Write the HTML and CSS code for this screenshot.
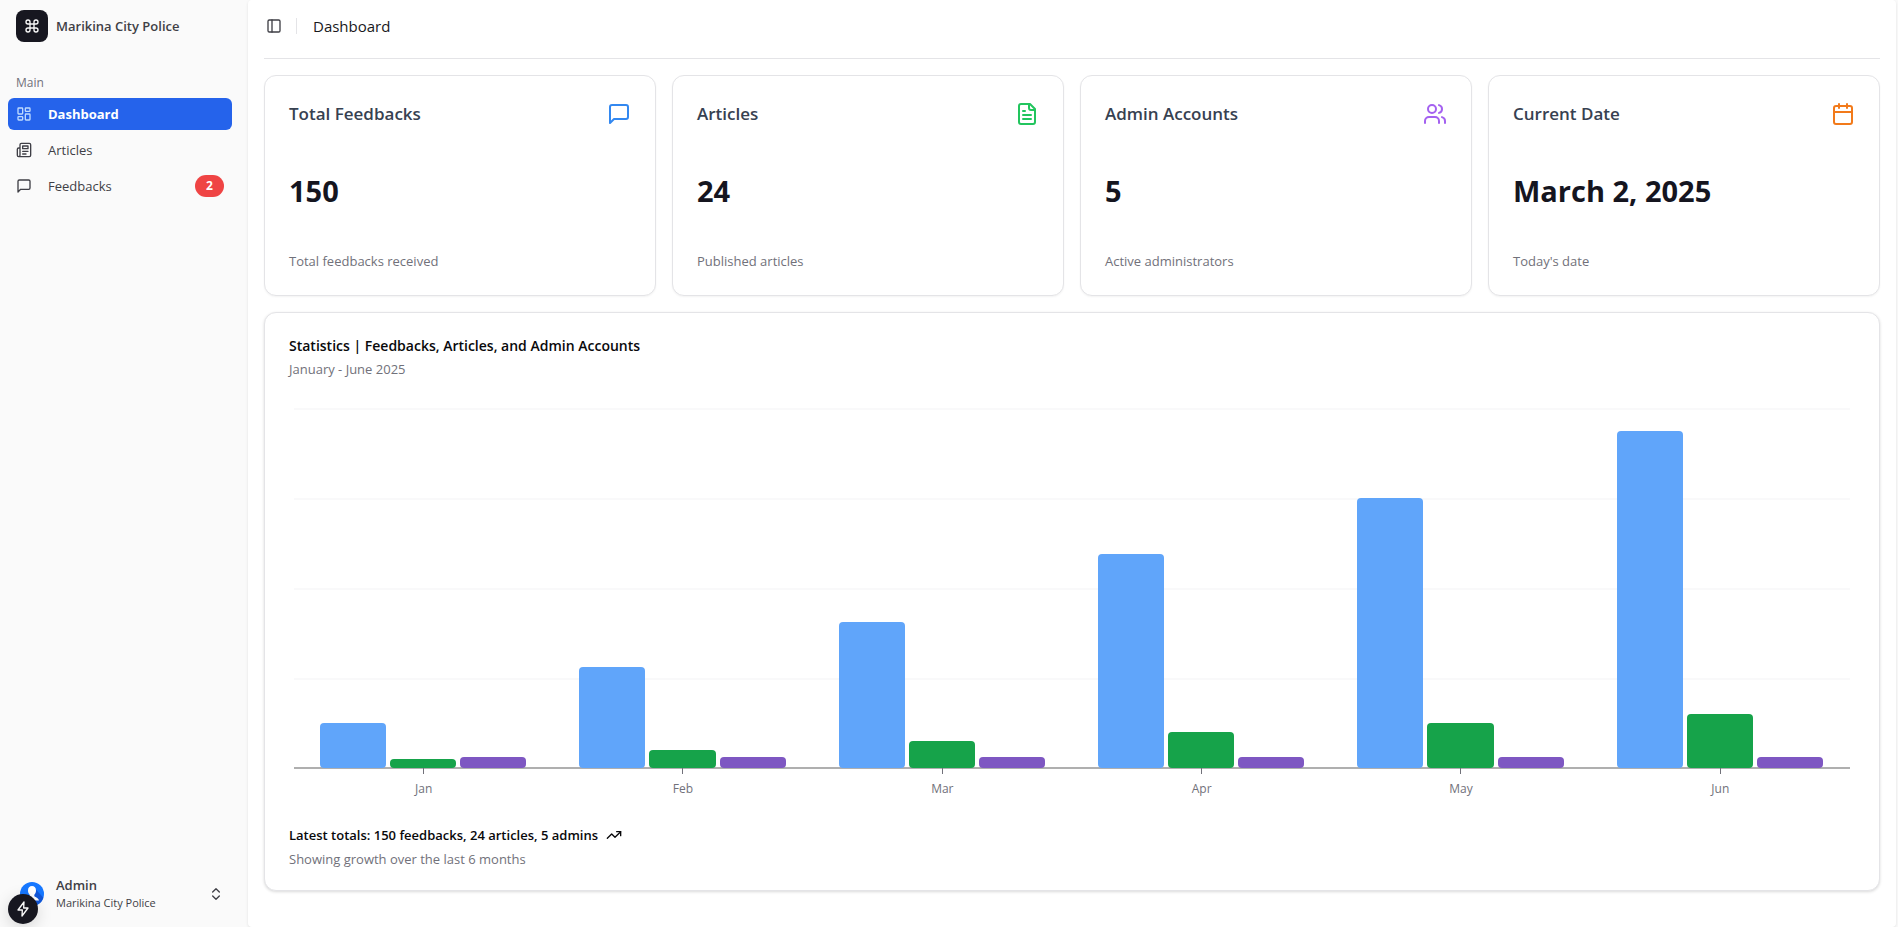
FILE: index.html
```html
<!DOCTYPE html>
<html lang="en">
<head>
<meta charset="utf-8">
<meta name="viewport" content="width=device-width, initial-scale=1">
<title>Dashboard</title>
<link rel="stylesheet" href="styles.css">
</head>
<body>
<div class="app">
  <aside class="sidebar">
    <div class="brand">
      <span class="brand-logo"><svg class="icon" viewBox="0 0 24 24"><path d="M15 6v12a3 3 0 1 0 3-3H6a3 3 0 1 0 3 3V6a3 3 0 1 0-3 3h12a3 3 0 1 0-3-3"/></svg></span>
      <span class="brand-name">Marikina City Police</span>
    </div>
    <nav class="nav" aria-label="Main">
      <div class="nav-heading">Main</div>
      <a class="nav-link active" href="#dashboard"><svg class="icon" viewBox="0 0 24 24"><rect width="7" height="9" x="3" y="3" rx="1"/><rect width="7" height="5" x="14" y="3" rx="1"/><rect width="7" height="9" x="14" y="12" rx="1"/><rect width="7" height="5" x="3" y="16" rx="1"/></svg><span>Dashboard</span></a>
      <a class="nav-link" href="#articles"><svg class="icon" viewBox="0 0 24 24"><path d="M4 22h16a2 2 0 0 0 2-2V4a2 2 0 0 0-2-2H8a2 2 0 0 0-2 2v16a2 2 0 0 1-2 2Zm0 0a2 2 0 0 1-2-2v-9c0-1.100.9-2 2-2h2"/><path d="M18 14h-8"/><path d="M15 18h-5"/><path d="M10 6h8v4h-8V6Z"/></svg><span>Articles</span></a>
      <a class="nav-link" href="#feedbacks"><svg class="icon" viewBox="0 0 24 24"><path d="M21 15a2 2 0 0 1-2 2H7l-4 4V5a2 2 0 0 1 2-2h14a2 2 0 0 1 2 2z"/></svg><span>Feedbacks</span><span class="badge">2</span></a>
    </nav>
    <button class="account" type="button">
      <svg class="avatar" viewBox="0 0 24 24"><circle cx="12" cy="12" r="12" fill="#1677ff"/><path d="M15.500 7l7.900 8.800A12 12 0 0 1 14 23.800L8 17z" fill="#1257d8"/><path d="M12 4c2.500 0 4 1.800 4 4.400 0 2-.8 3.500-1.700 4.400v1.100c0 1 4.200 1.600 4.700 4.600H5c.5-3 4.700-3.600 4.700-4.600v-1.100C8.800 11.900 8 10.400 8 8.400 8 5.800 9.500 4 12 4z" fill="#fff"/></svg>
      <span class="account-text"><span class="account-name">Admin</span><span class="account-org">Marikina City Police</span></span>
      <svg class="icon" viewBox="0 0 24 24"><path d="m7 15 5 5 5-5"/><path d="m7 9 5-5 5 5"/></svg>
    </button>
    <button class="dev-button" type="button" aria-label="Developer tools"><svg class="icon" viewBox="0 0 24 24"><path d="M13.500 1.500 4.500 13.500h6.500L10.500 22.500 19.500 10.500h-6.500z"/></svg></button>
  </aside>

  <main class="content">
    <header class="topbar">
      <button class="toggle" type="button" aria-label="Toggle sidebar"><svg class="icon" viewBox="0 0 24 24"><rect width="18" height="18" x="3" y="3" rx="2"/><path d="M9 3v18"/></svg></button>
      <span class="divider"></span>
      <h1 class="page-title">Dashboard</h1>
    </header>

    <section class="stats" aria-label="Totals">
      <article class="card stat">
        <div class="stat-head"><h2 class="stat-title">Total Feedbacks</h2><svg class="icon large blue" viewBox="0 0 24 24"><path d="M21 15a2 2 0 0 1-2 2H7l-4 4V5a2 2 0 0 1 2-2h14a2 2 0 0 1 2 2z"/></svg></div>
        <p class="stat-value">150</p>
        <p class="muted">Total feedbacks received</p>
      </article>
      <article class="card stat">
        <div class="stat-head"><h2 class="stat-title">Articles</h2><svg class="icon large green" viewBox="0 0 24 24"><path d="M15 2H6a2 2 0 0 0-2 2v16a2 2 0 0 0 2 2h12a2 2 0 0 0 2-2V7Z"/><path d="M14 2v4a2 2 0 0 0 2 2h4"/><path d="M10 9H8"/><path d="M16 13H8"/><path d="M16 17H8"/></svg></div>
        <p class="stat-value">24</p>
        <p class="muted">Published articles</p>
      </article>
      <article class="card stat">
        <div class="stat-head"><h2 class="stat-title">Admin Accounts</h2><svg class="icon large purple" viewBox="0 0 24 24"><path d="M16 21v-2a4 4 0 0 0-4-4H6a4 4 0 0 0-4 4v2"/><circle cx="9" cy="7" r="4"/><path d="M22 21v-2a4 4 0 0 0-3-3.870"/><path d="M16 3.130a4 4 0 0 1 0 7.750"/></svg></div>
        <p class="stat-value">5</p>
        <p class="muted">Active administrators</p>
      </article>
      <article class="card stat">
        <div class="stat-head"><h2 class="stat-title">Current Date</h2><svg class="icon large orange" viewBox="0 0 24 24"><path d="M8 2v4"/><path d="M16 2v4"/><rect width="18" height="18" x="3" y="4" rx="2"/><path d="M3 10h18"/></svg></div>
        <p class="stat-value">March 2, 2025</p>
        <p class="muted">Today's date</p>
      </article>
    </section>

    <section class="card chart-card">
      <h2 class="chart-title">Statistics | Feedbacks, Articles, and Admin Accounts</h2>
      <p class="muted">January - June 2025</p>
      <div class="chart">
        <div class="plot">
          <div class="group"><i class="bar feedbacks" style="height:12.5%"></i><i class="bar articles" style="height:2.5%"></i><i class="bar admins" style="height:3.125%"></i></div>
          <div class="group"><i class="bar feedbacks" style="height:28.125%"></i><i class="bar articles" style="height:5%"></i><i class="bar admins" style="height:3.125%"></i></div>
          <div class="group"><i class="bar feedbacks" style="height:40.625%"></i><i class="bar articles" style="height:7.5%"></i><i class="bar admins" style="height:3.125%"></i></div>
          <div class="group"><i class="bar feedbacks" style="height:59.375%"></i><i class="bar articles" style="height:10%"></i><i class="bar admins" style="height:3.125%"></i></div>
          <div class="group"><i class="bar feedbacks" style="height:75%"></i><i class="bar articles" style="height:12.5%"></i><i class="bar admins" style="height:3.125%"></i></div>
          <div class="group"><i class="bar feedbacks" style="height:93.75%"></i><i class="bar articles" style="height:15%"></i><i class="bar admins" style="height:3.125%"></i></div>
        </div>
        <div class="months"><span>Jan</span><span>Feb</span><span>Mar</span><span>Apr</span><span>May</span><span>Jun</span></div>
      </div>
      <p class="summary">Latest totals: 150 feedbacks, 24 articles, 5 admins <svg class="icon" viewBox="0 0 24 24"><path d="M22 7 13.500 15.500 8.500 10.500 2 17"/><path d="M16 7h6v6"/></svg></p>
      <p class="muted">Showing growth over the last 6 months</p>
    </section>
  </main>
</div>
</body>
</html>
```
FILE: styles.css
```css
* { box-sizing: border-box; }

body {
  margin: 0;
  font-family: "Open Sans", "Noto Sans", sans-serif;
  font-size: 14px;
  line-height: 20px;
  color: #3f3f46;
  background: #fafafa;
}

h1, h2, p { margin: 0; }
button { font: inherit; color: inherit; border: 0; background: none; padding: 0; }

.icon {
  width: 16px;
  height: 16px;
  flex: none;
  fill: none;
  stroke: currentColor;
  stroke-width: 2;
  stroke-linecap: round;
  stroke-linejoin: round;
}
.icon.large { width: 24px; height: 24px; }
.blue { color: #3388f0; }
.green { color: #22c55e; }
.purple { color: #a461f0; }
.orange { color: #f27a1a; }

.app {
  display: grid;
  grid-template-columns: 248px minmax(0, 1fr);
  min-height: 100vh;
  padding-right: 2px;
}

.sidebar {
  position: relative;
  display: flex;
  flex-direction: column;
  padding: 10px 16px 15px 8px;
}

.brand { display: flex; align-items: center; gap: 8px; padding: 0 8px; }
.brand-logo {
  display: grid;
  place-items: center;
  width: 32px;
  height: 32px;
  border-radius: 8px;
  background: #171720;
  color: #fafafa;
}
.brand-name { font-size: 13px; font-weight: 600; }

.nav { display: flex; flex-direction: column; gap: 4px; margin-top: 24px; }
.nav-heading { padding: 7px 8px 1px; height: 28px; font-size: 12px; color: #71717a; }
.nav-link {
  display: flex;
  align-items: center;
  gap: 16px;
  height: 32px;
  padding: 0 8px;
  border-radius: 6px;
  color: inherit;
  font-size: 13px;
  text-decoration: none;
}
.nav-link.active { background: #2563eb; color: #fff; font-weight: 700; }
.nav-link.active .icon { color: #bfdbfe; }
.badge {
  margin-left: auto;
  width: 29px;
  height: 22px;
  border-radius: 11px;
  background: #ef4444;
  color: #fff;
  font-size: 12px;
  font-weight: 700;
  line-height: 22px;
  text-align: center;
}

.account {
  display: flex;
  align-items: center;
  gap: 12px;
  margin-top: auto;
  padding: 0 8px 0 12px;
  text-align: left;
}
.avatar { width: 24px; height: 24px; flex: none; }
.account-text { display: flex; flex-direction: column; flex: 1; line-height: 18px; }
.account-name { font-size: 13px; font-weight: 600; }
.account-org { font-size: 11px; }

.dev-button {
  position: absolute;
  left: 8px;
  bottom: 3px;
  display: grid;
  place-items: center;
  width: 30px;
  height: 30px;
  border-radius: 50%;
  background: #171720;
  color: #fafafa;
  box-shadow: 0 4px 16px rgba(0, 0, 0, 0.15);
}

.content {
  padding: 0 16px;
  background: #fff;
  border-radius: 4px;
  box-shadow: 0 1px 3px rgba(0, 0, 0, 0.1);
}

.topbar {
  display: flex;
  align-items: center;
  height: 59px;
  padding: 0 2px 6px;
  border-bottom: 1px solid #e4e4e7;
}
.toggle { display: flex; }
.divider { width: 1px; height: 16px; margin: 0 16px 0 14px; background: #e4e4e7; }
.page-title { font-size: 15px; font-weight: 400; color: #18181b; }

.card {
  background: #fff;
  border: 1px solid #e4e4e7;
  border-radius: 12px;
  box-shadow: 0 1px 2px rgba(0, 0, 0, 0.05);
}
.muted { font-size: 13px; color: #71717a; }

.stats {
  display: grid;
  grid-template-columns: repeat(4, minmax(0, 1fr));
  gap: 16px;
  margin: 16px 0;
}
.stat { padding: 24px; }
.stat-head { display: flex; align-items: center; justify-content: space-between; height: 28px; }
.stat-title { font-size: 17px; font-weight: 600; color: #374151; }
.stat-value {
  margin: 45px 0 42px;
  font-size: 29px;
  line-height: 36px;
  font-weight: 700;
  color: #15151f;
}

.chart-card { padding: 24px 24px 21px; box-shadow: 0 1px 3px rgba(0, 0, 0, 0.15); }
.chart-title {
  margin-bottom: 4px;
  font-size: 14px;
  line-height: 18px;
  font-weight: 600;
  color: #09090b;
}

.chart { padding: 29px 5px 0; }
.plot {
  display: flex;
  height: 360px;
  background:
    linear-gradient(#afafaf, #afafaf) 0 100% / 100% 1px no-repeat,
    linear-gradient(#f9f9fa 2px, transparent 2px) 0 0 / 100% 90px;
  box-shadow: 0 1px 0 #afafaf;
}
.group { display: flex; flex: 1; align-items: flex-end; gap: 4px; padding: 0 27px 0 26px; }
.bar { flex: 1; border-radius: 4px; }
.feedbacks { background: #60a5fa; }
.articles { background: #16a34a; }
.admins { background: #7e57c2; }

.months { display: flex; }
.months span {
  flex: 1;
  font-size: 12px;
  line-height: 16px;
  text-align: center;
  color: #71717a;
}
.months span::before {
  content: "";
  display: block;
  width: 1px;
  height: 6px;
  margin: 0 auto 7px;
  background: #71717a;
}

.summary {
  display: flex;
  align-items: center;
  gap: 8px;
  margin: 28px 0 4px;
  font-size: 13px;
  font-weight: 600;
  color: #09090b;
}
```
